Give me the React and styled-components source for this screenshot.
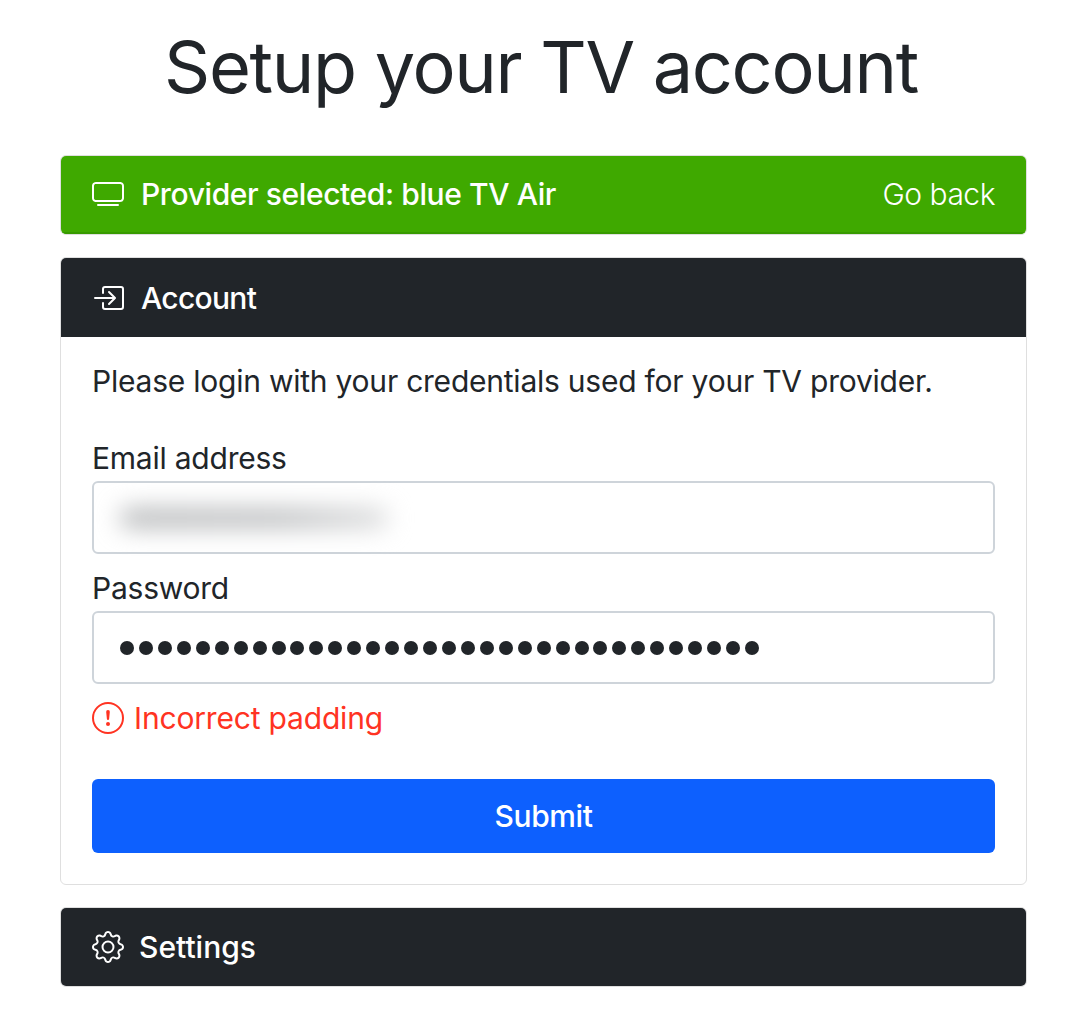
import styled, { createGlobalStyle } from 'styled-components';

const GlobalStyle = createGlobalStyle`
    * { box-sizing: border-box; }
    body {
        margin: 0;
        background: #fff;
        color: #212529;
        font-family: Inter, "Liberation Sans", sans-serif;
    }
`;

const SPage = styled.div`
    display: flex;
    flex-direction: column;
    gap: 22px;
    width: 1066px;
    padding: 0 39px 29px 60px;
`;

const STitle = styled.h1`
    margin: 24px 0 23px;
    padding-right: 5px;
    font-size: 72px;
    line-height: 86px;
    font-weight: 400;
    letter-spacing: -1.33px;
    text-align: center;
`;

const SCard = styled.section`
    border: 1px solid #dfdfdf;
    border-radius: 6px;
    overflow: hidden;
    background: #fff;
`;

const SCardHeader = styled.header`
    display: flex;
    align-items: center;
    justify-content: space-between;
    height: ${props => props.$height || 78}px;
    padding: 0 31px;
    color: #fff;
    font-size: 30px;
    background: ${props => props.$green ? '#3fa900' : '#212529'};
    border-bottom: ${props => props.$green ? '2px solid #379a00' : 'none'};
`;

const SCardTitle = styled.div`
    display: flex;
    align-items: center;
    gap: ${props => props.$gap || 17}px;
    font-weight: 500;
    letter-spacing: ${props => props.$tracking ?? -0.4}px;
`;

const SGoBack = styled.a`
    font-weight: 300;
    letter-spacing: -0.5px;
`;

const SCardBody = styled.div`
    display: flex;
    flex-direction: column;
    padding: 25px 31px 31px;
    font-size: 30px;
`;

const SIntro = styled.p`
    margin: 0 0 39px;
    line-height: 38px;
    letter-spacing: -0.23px;
`;

const SLabel = styled.label`
    display: block;
    margin-bottom: 4px;
    line-height: 38px;
    letter-spacing: -0.23px;
`;

const SField = styled.div`
    display: flex;
    align-items: center;
    height: 73px;
    margin-bottom: 15px;
    padding: 0 26px;
    border: 2px solid #ced4da;
    border-radius: 6px;
    background: #fff;
`;

const SBlurred = styled.span`
    display: block;
    width: 268px;
    height: 18px;
    border-radius: 9px;
    background: linear-gradient(90deg, #aeb0b2, #b4b6b8 60%, #d8d9da);
    filter: blur(12px);
`;

const SDots = styled.div`
    display: flex;
    gap: 4.95px;
`;

const SDot = styled.i`
    display: block;
    width: 14px;
    height: 14px;
    border-radius: 50%;
    background: #212529;
`;

const SError = styled.div`
    display: flex;
    align-items: center;
    gap: 10px;
    margin: 0 0 42px;
    line-height: 38px;
    color: #ff3322;
    letter-spacing: -0.18px;
`;

const SSubmit = styled.button`
    height: 74px;
    border: 0;
    border-radius: 6px;
    color: #fff;
    font: 500 30px Inter, "Liberation Sans", sans-serif;
    letter-spacing: -0.4px;
    background: #0d60fe;
`;

const Icon = ({ size = 32, children }) => (
    <svg width={size} height={size} viewBox="0 0 16 16" fill="currentColor">{children}</svg>
);

const TvIcon = () => (
    <Icon>
        <path d="M2.5 13.5A.5.5 0 0 1 3 13h10a.5.5 0 0 1 0 1H3a.5.5 0 0 1-.5-.5zM13.991 3l.024.001a1.46 1.46 0 0 1 .538.143.757.757 0 0 1 .302.254c.067.1.145.277.145.602v5.991l-.001.024a1.464 1.464 0 0 1-.143.538.758.758 0 0 1-.254.302c-.1.067-.277.145-.602.145H2.009l-.024-.001a1.464 1.464 0 0 1-.538-.143.758.758 0 0 1-.302-.254C1.078 10.502 1 10.325 1 10V4.009l.001-.024a1.46 1.46 0 0 1 .143-.538.758.758 0 0 1 .254-.302C1.498 3.078 1.675 3 2 3h11.991zM14 2H2C0 2 0 4 0 4v6c0 2 2 2 2 2h12c2 0 2-2 2-2V4c0-2-2-2-2-2z" />
    </Icon>
);

const LoginIcon = () => (
    <Icon>
        <path d="M6 3.5a.5.5 0 0 1 .5-.5h8a.5.5 0 0 1 .5.5v9a.5.5 0 0 1-.5.5h-8a.5.5 0 0 1-.5-.5v-2a.5.5 0 0 0-1 0v2A1.5 1.5 0 0 0 6.5 14h8a1.5 1.5 0 0 0 1.5-1.5v-9A1.5 1.5 0 0 0 14.5 2h-8A1.5 1.5 0 0 0 5 3.5v2a.5.5 0 0 0 1 0v-2z" />
        <path d="M11.854 8.354a.5.5 0 0 0 0-.708l-3-3a.5.5 0 1 0-.708.708L10.293 7.5H1.5a.5.5 0 0 0 0 1h8.793l-2.147 2.146a.5.5 0 0 0 .708.708l3-3z" />
    </Icon>
);

const AlertIcon = () => (
    <Icon>
        <path d="M8 15A7 7 0 1 1 8 1a7 7 0 0 1 0 14zm0 1A8 8 0 1 0 8 0a8 8 0 0 0 0 16z" />
        <path d="M7.002 11a1 1 0 1 1 2 0 1 1 0 0 1-2 0zM7.1 4.995a.905.905 0 1 1 1.8 0l-.35 3.507a.552.552 0 0 1-1.1 0L7.1 4.995z" />
    </Icon>
);

const GearIcon = () => (
    <Icon>
        <path d="M8 4.754a3.246 3.246 0 1 0 0 6.492 3.246 3.246 0 0 0 0-6.492zM5.754 8a2.246 2.246 0 1 1 4.492 0 2.246 2.246 0 0 1-4.492 0z" />
        <path d="M9.796 1.343c-.527-1.79-3.065-1.79-3.592 0l-.094.319a.873.873 0 0 1-1.255.52l-.292-.16c-1.64-.892-3.433.902-2.54 2.541l.159.292a.873.873 0 0 1-.52 1.255l-.319.094c-1.79.527-1.79 3.065 0 3.592l.319.094a.873.873 0 0 1 .52 1.255l-.16.292c-.892 1.64.901 3.434 2.541 2.54l.292-.159a.873.873 0 0 1 1.255.52l.094.319c.527 1.79 3.065 1.79 3.592 0l.094-.319a.873.873 0 0 1 1.255-.52l.292.16c1.64.893 3.434-.902 2.54-2.541l-.159-.292a.873.873 0 0 1 .52-1.255l.319-.094c1.79-.527 1.79-3.065 0-3.592l-.319-.094a.873.873 0 0 1-.52-1.255l.16-.292c.893-1.64-.902-3.433-2.541-2.54l-.292.159a.873.873 0 0 1-1.255-.52l-.094-.319zm-2.633.283c.246-.835 1.428-.835 1.674 0l.094.319a1.873 1.873 0 0 0 2.693 1.115l.291-.16c.764-.415 1.6.42 1.184 1.185l-.159.292a1.873 1.873 0 0 0 1.116 2.692l.318.094c.835.246.835 1.428 0 1.674l-.319.094a1.873 1.873 0 0 0-1.115 2.693l.16.291c.415.764-.42 1.6-1.185 1.184l-.291-.159a1.873 1.873 0 0 0-2.693 1.116l-.094.318c-.246.835-1.428.835-1.674 0l-.094-.319a1.873 1.873 0 0 0-2.692-1.115l-.292.16c-.764.415-1.6-.42-1.184-1.185l.159-.291A1.873 1.873 0 0 0 1.945 8.93l-.319-.094c-.835-.246-.835-1.428 0-1.674l.319-.094A1.873 1.873 0 0 0 3.06 4.377l-.16-.292c-.415-.764.42-1.6 1.185-1.184l.292.159a1.873 1.873 0 0 0 2.692-1.115l.094-.319z" />
    </Icon>
);

export default function App() {
    return (
        <SPage>
            <GlobalStyle />
            <STitle>Setup your TV account</STitle>
            <SCard>
                <SCardHeader $green>
                    <SCardTitle><TvIcon />Provider selected: blue TV Air</SCardTitle>
                    <SGoBack>Go back</SGoBack>
                </SCardHeader>
            </SCard>
            <SCard>
                <SCardHeader $height={79}><SCardTitle $tracking={-0.7}><LoginIcon />Account</SCardTitle></SCardHeader>
                <SCardBody>
                    <SIntro>Please login with your credentials used for your TV provider.</SIntro>
                    <SLabel>Email address</SLabel>
                    <SField><SBlurred /></SField>
                    <SLabel>Password</SLabel>
                    <SField>
                        <SDots>{Array.from({ length: 34 }, (_, i) => <SDot key={i} />)}</SDots>
                    </SField>
                    <SError><AlertIcon />Incorrect padding</SError>
                    <SSubmit>Submit</SSubmit>
                </SCardBody>
            </SCard>
            <SCard>
                <SCardHeader><SCardTitle $gap={15} $tracking={0}><GearIcon />Settings</SCardTitle></SCardHeader>
            </SCard>
        </SPage>
    );
}
